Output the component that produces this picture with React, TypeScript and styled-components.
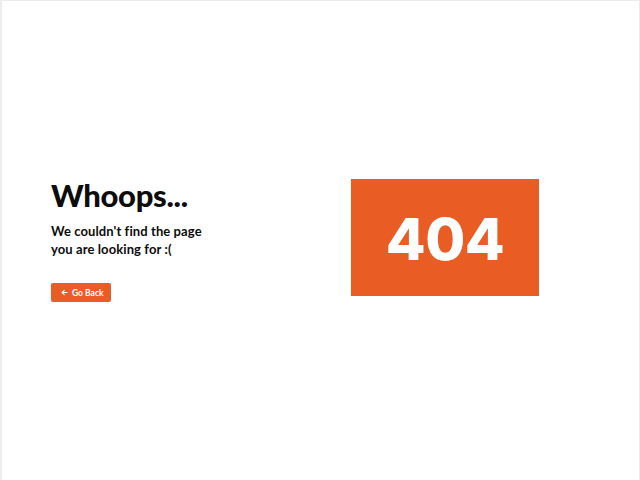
import React from "react";
import styled, { createGlobalStyle } from "styled-components";

const Colors = {
  accent: "#e95d24",
  text: "#0c0c0c",
  frame: "#ececec",
};

const GlobalStyle = createGlobalStyle`
  html, body {
    margin: 0;
    padding: 0;
    background: #ffffff;
  }
  body {
    font-family: Lato, "Noto Sans", sans-serif;
    color: ${Colors.text};
  }
`;

const App: React.FC = () => {
  return (
    <>
      <GlobalStyle />
      <Page>
        <Content>
          <Message>
            <Title>Whoops...</Title>
            <Subtitle>
              We couldn't find the page
              <br />
              you are looking for :(
            </Subtitle>
            <BackButton type="button">
              <ArrowIcon viewBox="0 0 10 10" aria-hidden="true">
                <path
                  d="M8.5 5H1.8M4.6 2 1.6 5l3 3"
                  fill="none"
                  stroke="currentColor"
                  strokeWidth="1.6"
                  strokeLinecap="round"
                  strokeLinejoin="round"
                />
              </ArrowIcon>
              Go Back
            </BackButton>
          </Message>
          <CodeBox>404</CodeBox>
        </Content>
      </Page>
    </>
  );
};

export default App;

const Page = styled.div`
  box-sizing: border-box;
  height: 480px;
  width: 640px;
  border: 1px solid ${Colors.frame};
  border-bottom: none;
  border-left-width: 2px;
  display: flex;
  align-items: center;
`;

const Content = styled.div`
  display: grid;
  grid-template-columns: 300px 188px;
  align-items: center;
  padding: 0 0 0 49px;
  margin-top: -6px;
`;

const Message = styled.div`
  display: flex;
  flex-direction: column;
  align-items: flex-start;
  padding-top: 4px;
`;

const Title = styled.h1`
  margin: 0;
  font-size: 31px;
  font-weight: 900;
  letter-spacing: -0.3px;
  line-height: 36px;
`;

const Subtitle = styled.p`
  margin: 9px 0 0;
  font-size: 13px;
  font-weight: 700;
  line-height: 18px;
  letter-spacing: 0.1px;
`;

const BackButton = styled.button`
  margin-top: 25px;
  display: flex;
  align-items: center;
  gap: 4px;
  height: 19px;
  width: 60px;
  padding: 0 0 0 10px;
  border: none;
  border-radius: 2px;
  background-color: ${Colors.accent};
  color: #ffffff;
  font-family: Lato, sans-serif;
  font-size: 8.5px;
  font-weight: 700;
  cursor: pointer;
`;

const ArrowIcon = styled.svg`
  width: 7px;
  height: 7px;
`;

const CodeBox = styled.div`
  font-family: Inter, sans-serif;
  height: 117px;
  display: flex;
  align-items: center;
  justify-content: center;
  background-color: ${Colors.accent};
  color: #ffffff;
  font-size: 58px;
  font-weight: 800;
  letter-spacing: -0.5px;
  padding-top: 2px;
  box-sizing: border-box;
`;
